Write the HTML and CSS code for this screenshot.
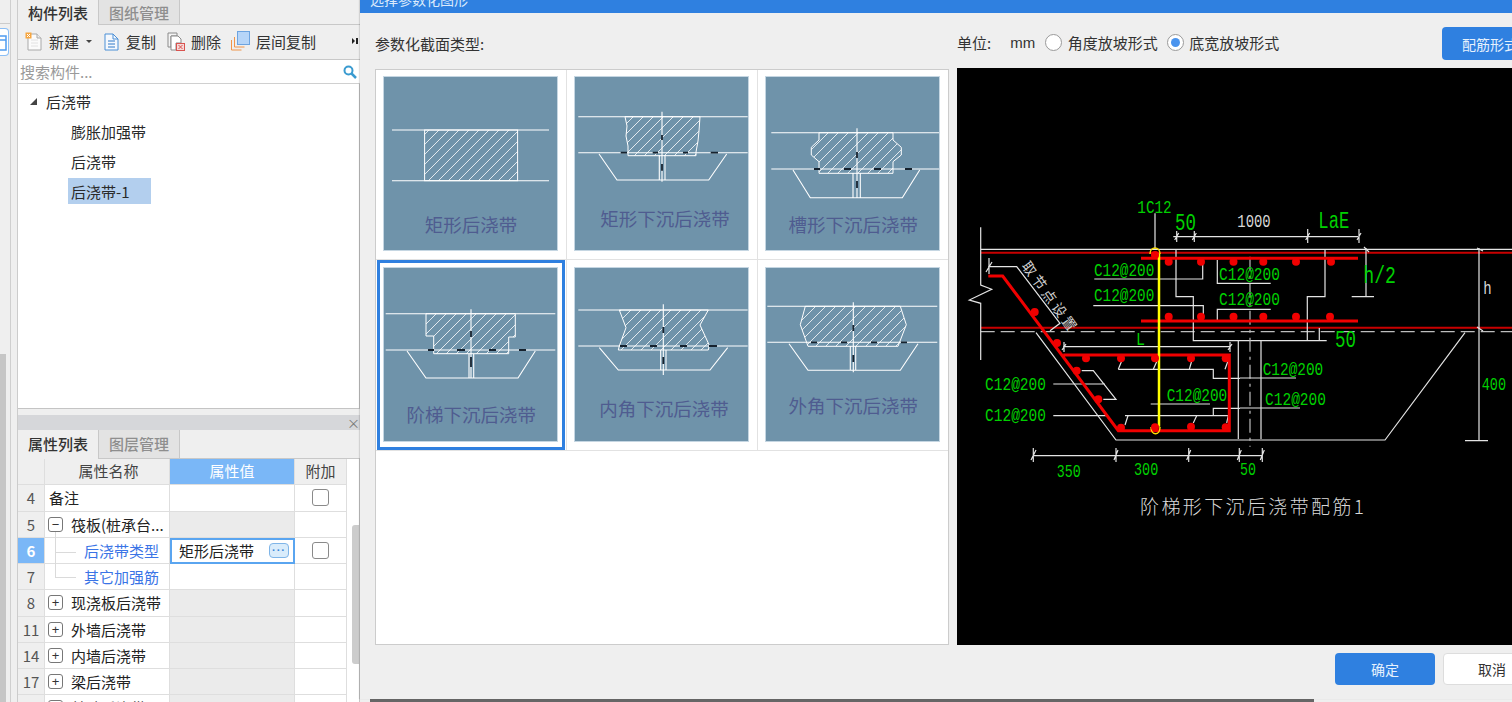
FILE: index.html
```html
<!DOCTYPE html>
<html lang="zh-CN">
<head>
<meta charset="utf-8">
<title>选择参数化图形</title>
<link rel="stylesheet" href="styles.css">
</head>
<body>
<div class="app">
  <div class="rail">
    <div class="rail-top"></div>
    <div class="rail-icon"><svg width="8" height="26" viewBox="0 0 8 26"><path d="M0 7h6v14H0" fill="none" stroke="#4f9cf0" stroke-width="1.5"/><path d="M0 11h6" stroke="#4f9cf0" stroke-width="1.5"/></svg></div>
    <div class="rail-thumb"></div>
  </div>
  <div class="side">
    <section class="panel-list">
      <div class="tabs">
        <div class="tab active">构件列表</div>
        <div class="tab">图纸管理</div>
      </div>
      <div class="toolbar">
        <div class="tool tool-new">
          <svg width="18" height="19" viewBox="0 0 18 19"><path d="M3 2h9l4 4v12H3z" fill="#fbfbfb" stroke="#a9a9a9"/><path d="M12 2v4h4" fill="#eee" stroke="#a9a9a9"/><path d="M6 8h7M6 11h7M6 14h7" stroke="#e2e2e2"/><rect x="0.5" y="0.5" width="6" height="6" fill="#f7a63f"/><path d="M2 2l3 3M5 2L2 5" stroke="#fff"/></svg>
          <span>新建</span><i class="caret"></i>
        </div>
        <div class="tool tool-copy">
          <svg width="17" height="19" viewBox="0 0 17 19"><path d="M2 2h8l5 5v11H2z" fill="#f4f8fd" stroke="#4a8fd6"/><path d="M10 2v5h5" fill="none" stroke="#4a8fd6"/><path d="M5 9h7M5 12h7M5 15h7" stroke="#2f78c8"/></svg>
          <span>复制</span>
        </div>
        <div class="tool tool-del">
          <svg width="18" height="19" viewBox="0 0 18 19"><path d="M1 1h9v3H4v11H1z" fill="#f4f4f4" stroke="#8a8a8a"/><path d="M4 4h7l3 3v4H9v7H4z" fill="#fff" stroke="#8a8a8a"/><rect x="9.5" y="11.5" width="8" height="7" fill="#f6d8d8" stroke="#d9534f"/><path d="M11.5 13l4 4M15.5 13l-4 4" stroke="#d9534f"/></svg>
          <span>删除</span>
        </div>
        <div class="tool tool-floor">
          <svg width="19" height="20" viewBox="0 0 19 20"><path d="M.5 9v10h10M3.500 6v10h10" fill="none" stroke="#f0954a"/><rect x="6.500" y="0.500" width="12" height="13" fill="#b6d5f8" stroke="#6da4e0"/></svg>
          <span>层间复制</span>
        </div>
        <div class="tool-more"><i class="more-tri"></i><i class="more-bar"></i></div>
      </div>
      <div class="search">
        <span>搜索构件...</span>
        <svg width="14" height="14" viewBox="0 0 14 14"><circle cx="5.500" cy="5.500" r="4" fill="none" stroke="#3a9bd0" stroke-width="2"/><path d="M8.500 8.500L13 13" stroke="#3a9bd0" stroke-width="2.500"/></svg>
      </div>
      <div class="tree">
        <div class="node root"><i class="arrow"></i>后浇带</div>
        <div class="node leaf"><span>膨胀加强带</span></div>
        <div class="node leaf"><span>后浇带</span></div>
        <div class="node leaf"><span class="selected">后浇带-1</span></div>
      </div>
    </section>
    <section class="panel-props">
      <div class="panel-head"><span class="close">×</span></div>
      <div class="tabs props-tabs">
        <div class="tab active">属性列表</div>
        <div class="tab">图层管理</div>
      </div>
      <div class="props-body">
        <div class="table">
          <div class="row head"><div class="num"></div><div class="name">属性名称</div><div class="val">属性值</div><div class="extra">附加</div></div>
          <div class="row"><div class="num">4</div><div class="name plain">备注</div><div class="val"></div><div class="extra"><i class="check"></i></div></div>
          <div class="row group"><div class="num">5</div><div class="name"><i class="exp">−</i>筏板(桩承台...</div><div class="val"></div><div class="extra"></div></div>
          <div class="row current"><div class="num">6</div><div class="name sub sub-first">后浇带类型</div><div class="val editing"><span>矩形后浇带</span><i class="more-btn">···</i></div><div class="extra"><i class="check"></i></div></div>
          <div class="row"><div class="num">7</div><div class="name sub sub-last">其它加强筋</div><div class="val"></div><div class="extra"></div></div>
          <div class="row group"><div class="num">8</div><div class="name"><i class="exp">+</i>现浇板后浇带</div><div class="val"></div><div class="extra"></div></div>
          <div class="row group"><div class="num">11</div><div class="name"><i class="exp">+</i>外墙后浇带</div><div class="val"></div><div class="extra"></div></div>
          <div class="row group"><div class="num">14</div><div class="name"><i class="exp">+</i>内墙后浇带</div><div class="val"></div><div class="extra"></div></div>
          <div class="row group"><div class="num">17</div><div class="name"><i class="exp">+</i>梁后浇带</div><div class="val"></div><div class="extra"></div></div>
          <div class="row group"><div class="num">20</div><div class="name"><i class="exp">+</i>基础后浇带</div><div class="val"></div><div class="extra"></div></div>
        </div>
        <div class="vscroll"><div class="vthumb"></div></div>
      </div>
    </section>
  </div>

  <div class="under"></div>
  <div class="dialog">
    <div class="titlebar"><span>选择参数化图形</span></div>
    <div class="dlg-main">
      <div class="col-left">
        <div class="label">参数化截面类型:</div>
        <div class="shapes">
          <div class="cell">
            <svg class="thumb" width="175" height="175" viewBox="0 0 175 175">
              <defs><pattern id="hatch" patternUnits="userSpaceOnUse" width="10" height="10"><path d="M-1 11L11 -1" stroke="#fff" stroke-width=".8"/></pattern></defs>
              <path class="ln" d="M9 54H166M9 104.700H166"/>
              <rect class="hatch" x="41.600" y="54" width="93" height="50.700"/>
              <text class="cap" x="88" y="155.500">矩形后浇带</text>
            </svg>
          </div>
          <div class="cell">
            <svg class="thumb" width="175" height="175" viewBox="0 0 175 175">
              <path class="hatch" d="M51 40.700L53 50 52 60 54 70 54 79.700H122V76L124 65 125 55 126 40.700Z"/>
              <path class="ln" d="M4.300 40.700H173.700M4.300 76.700H173.700M88 35.700V105.700M25 78L43 104H134.700L152.700 78M85.300 79V104M91 79V104"/>
              <path class="blk" d="M46.700 76.700H53M78.700 76.700H84M109 76.700H114M136.700 76.700H144M88 59V64M88 88V94.700"/>
              <text class="cap" x="91" y="149.500">矩形下沉后浇带</text>
            </svg>
          </div>
          <div class="cell">
            <svg class="thumb" width="175" height="175" viewBox="0 0 175 175">
              <path class="hatch" d="M54 56.700V64L46.300 71.300V79L54 85.700V97.300H128V85.700L136.300 79V71.300L128 64V56.700Z"/>
              <path class="ln" d="M6.300 56.700H175M6.300 93H175M92 52.300V122M28 94L45.300 121.700H137.300L154.700 94M88 97V122M95.300 97V122"/>
              <path class="blk" d="M49 93H55M79 93H86M109 93H116M140 93H147M92 76V82M92 105V112"/>
              <text class="cap" x="88.300" y="156">槽形下沉后浇带</text>
            </svg>
          </div>
          <div class="cell low chosen">
            <svg class="thumb" width="175" height="175" viewBox="0 0 175 175">
              <path class="hatch" d="M43 46.700V69H50.700V86.700H125.700V70H132.300V46.700Z"/>
              <path class="ln" d="M2.700 46.700H172.300M2.700 83H172.300M88 42.300V111.300M24 84L43 111H135L152.300 84M86 87V111M90.700 87V111"/>
              <path class="blk" d="M45 83H51M74 83H82M106 83H113M136 83H143M88 64V70M88 90V100"/>
              <text class="cap" x="88.300" y="154.500">阶梯下沉后浇带</text>
            </svg>
          </div>
          <div class="cell low">
            <svg class="thumb" width="175" height="175" viewBox="0 0 175 175">
              <path class="hatch" d="M45.300 43L52 60.700 45.300 79 44.300 83H134.300L135.300 78.300 126 58 134.300 43Z"/>
              <path class="ln" d="M4.300 43H173.700M4.300 79H173.700M89.300 37.300V108M25.300 80.700L44.300 103H136L153.700 80.700M86.700 83V103M92 83V103"/>
              <path class="blk" d="M46 79H53M76 79H83M106 79H113M135 79H143M89.300 60V66M89.300 90V97"/>
              <text class="cap" x="90" y="149">内角下沉后浇带</text>
            </svg>
          </div>
          <div class="cell low">
            <svg class="thumb" width="175" height="175" viewBox="0 0 175 175">
              <path class="hatch" d="M40.300 39.300L35.300 57.700 43 79.300H133L141.300 57.700 135.300 39.300Z"/>
              <path class="ln" d="M2.300 39.300H172.300M2.300 75.300H172.300M88.300 35.300V105.300M24 76.700L43 103.300H135.300L153 76.700M85.300 79V103M90.700 79V103"/>
              <path class="blk" d="M46 75.300H52M76 75.300H82M106 75.300H112M136 75.300H142M88.300 58V64M88.300 88V95"/>
              <text class="cap" x="88.300" y="145.500">外角下沉后浇带</text>
            </svg>
          </div>
        </div>
      </div>
      <div class="col-right">
        <div class="options">
          <span class="unit">单位:</span>
          <span class="mm">mm</span>
          <label class="radio"><i class="dot"></i>角度放坡形式</label>
          <label class="radio"><i class="dot on"></i>底宽放坡形式</label>
          <button class="btn primary form-btn">配筋形式</button>
        </div>
        <svg class="cad" width="555" height="577" viewBox="957 68 555 577">
          <!-- slab -->
          <path class="w" d="M980.700 249.300H1512"/>
          <path class="wd" d="M980.700 331.700H1512"/>
          <path class="dr" d="M980.700 252.700H1512M980.700 327.700H1512"/>
          <path class="w" d="M980.700 227.300V285L991.700 289.300 969.300 300 980.700 303.300V360"/>
          <!-- concrete outline -->
          <path class="w" d="M1036 332.700L1116 440H1385L1465 332.700"/>
          <path class="w" d="M1176 249.300V296.700H1193.300V340.700H1326.700M1307.300 340.700V296.700H1325V250"/>
          <path class="w" d="M1238.300 340.700V439M1261 340.700V439"/>
          <path class="wc" d="M1250 256.700V446.700"/>
          <!-- leaders -->
          <path class="w" d="M1155 213.300V250M1094.300 279H1202.700V261.700M1093.300 305.700H1203.300V316.700M1217.300 260V283.300H1270.700M1217.300 321V309.300H1270.700"/>
          <path class="w" d="M988.300 266.700H1016.700L1060 323.300 1050 330.700M1118.300 369.300H1213.300V378.300H1240M1125 415.700H1228.300M1213.300 415.700V408.300H1240"/>
          <path class="w" d="M1121.700 361L1118.300 369.300M1157 361L1153.300 369.300M1191.700 361L1189.300 369.300M1228 361L1225 369.300M1128 415.700L1125 425M1196.700 415.700L1193.300 423M1228.300 415.700L1226.700 423"/>
          <path class="w" d="M1053.300 384H1105M1081.700 370.700H1093.300L1116 399.300H1103.300M1053.300 415.700H1106.700M1150.700 404H1210M1240 378H1296M1240 408H1300"/>
          <!-- dimensions -->
          <path class="w" d="M1173.300 236.700H1358.300M1063.300 346.700H1230M1033.300 455.700H1262.300M1366 248.300V296.700M1351.700 296.700H1374M1479 248.300V440M1465 440.700H1488M1319.300 328V341"/>
          <path class="w" d="M1176.700 231V242M1174.700 240L1178.700 233M1194.300 231V242M1192.300 240L1196.300 233M1307.700 229V243M1305.700 240L1309.700 233M1359 229V243M1357 240L1361 233M1064 342V352M1062 350L1066 344M1230 342V352M1228 350L1232 344M989 258V274M986 272L992 262M1033.300 448V462M1031 460L1036 450M1116 448V462M1114 460L1118 450M1188.700 448V462M1186.700 460L1190.700 450M1239.300 448V462M1237.300 460L1241.300 450M1262.300 448V462M1260.300 460L1264.300 450M1364 247L1369 252M1477 248L1483 251M1477 327L1483 331"/>
          <!-- rebar -->
          <path class="rb" d="M1141 258.300H1358M1141 321H1358"/>
          <path class="rb" d="M988.300 276H1002.700L1118.300 430.700H1229.300V355H1063.300"/>
          <path class="yl" d="M1159 253.300V426.700"/>
          <path class="yl-thin" d="M1150 254C1150 246 1160 246 1160 254M1151 427C1151 436 1160 436 1160 427"/>
          <g class="dots">
            <circle cx="1155" cy="255" r="4"/><circle cx="1168.700" cy="261.700" r="4"/><circle cx="1201" cy="261.700" r="4"/><circle cx="1233.500" cy="261.700" r="4"/><circle cx="1263.300" cy="261.700" r="4"/><circle cx="1296" cy="261.700" r="4"/><circle cx="1331" cy="261.700" r="4"/>
            <circle cx="1168.700" cy="316.700" r="4"/><circle cx="1201" cy="316.700" r="4"/><circle cx="1233.500" cy="316.700" r="4"/><circle cx="1263.300" cy="316.700" r="4"/><circle cx="1296" cy="316.700" r="4"/><circle cx="1330" cy="316.700" r="4"/>
            <circle cx="1034.700" cy="312" r="4"/><circle cx="1057" cy="343" r="4"/><circle cx="1076.700" cy="370.700" r="4"/><circle cx="1098.300" cy="399.300" r="4"/>
            <circle cx="1086" cy="358.300" r="4"/><circle cx="1121" cy="358.300" r="4"/><circle cx="1155" cy="358.300" r="4"/><circle cx="1191" cy="358.300" r="4"/><circle cx="1225.700" cy="358.300" r="4"/>
            <circle cx="1121" cy="427.700" r="4"/><circle cx="1155" cy="427.300" r="4"/><circle cx="1191" cy="426.700" r="4"/><circle cx="1225.700" cy="427.300" r="4"/>
          </g>
          <!-- labels -->
          <text class="g" x="1137.300" y="213" textLength="34.400" lengthAdjust="spacingAndGlyphs">1C12</text>
          <text class="g big" x="1175" y="230" textLength="21" lengthAdjust="spacingAndGlyphs">50</text>
          <text class="t" x="1237.300" y="227" textLength="33.400" lengthAdjust="spacingAndGlyphs">1000</text>
          <text class="g big" x="1318.300" y="227.700" textLength="31" lengthAdjust="spacingAndGlyphs">LaE</text>
          <text class="g big" x="1363.300" y="282.700" textLength="32.700" lengthAdjust="spacingAndGlyphs">h/2</text>
          <text class="g big" x="1335" y="347.300" textLength="21" lengthAdjust="spacingAndGlyphs">50</text>
          <text class="g" x="1136" y="345" textLength="9" lengthAdjust="spacingAndGlyphs">L</text>
          <text class="t" x="1483.300" y="294.300" textLength="8.400" lengthAdjust="spacingAndGlyphs">h</text>
          <text class="g" x="1481.700" y="390" textLength="24.300" lengthAdjust="spacingAndGlyphs">400</text>
          <text class="g" x="1240" y="475" textLength="16" lengthAdjust="spacingAndGlyphs">50</text>
          <text class="g" x="1056.700" y="477.300" textLength="24" lengthAdjust="spacingAndGlyphs">350</text>
          <text class="g" x="1134" y="475" textLength="24.300" lengthAdjust="spacingAndGlyphs">300</text>
          <text class="g" x="1094" y="276" textLength="60.300" lengthAdjust="spacingAndGlyphs">C12@200</text>
          <text class="g" x="1094" y="301" textLength="60.300" lengthAdjust="spacingAndGlyphs">C12@200</text>
          <text class="g" x="1219" y="280" textLength="61" lengthAdjust="spacingAndGlyphs">C12@200</text>
          <text class="g" x="1219" y="305" textLength="61" lengthAdjust="spacingAndGlyphs">C12@200</text>
          <text class="g" x="1262.700" y="375" textLength="60.600" lengthAdjust="spacingAndGlyphs">C12@200</text>
          <text class="g" x="1265" y="405" textLength="61" lengthAdjust="spacingAndGlyphs">C12@200</text>
          <text class="g" x="985" y="390" textLength="61" lengthAdjust="spacingAndGlyphs">C12@200</text>
          <text class="g" x="985" y="420.700" textLength="61" lengthAdjust="spacingAndGlyphs">C12@200</text>
          <text class="g" x="1166.700" y="401" textLength="60.600" lengthAdjust="spacingAndGlyphs">C12@200</text>
          <text class="rot" transform="translate(1021 266) rotate(54)">取节点设置</text>
          <text class="ttl" x="1140" y="514" textLength="224">阶梯形下沉后浇带配筋1</text>
        </svg>
      </div>
    </div>
    <div class="dlg-foot">
      <button class="btn primary ok">确定</button>
      <button class="btn cancel">取消</button>
    </div>
  </div>
</div>
</body>
</html>
```

FILE: styles.css
```css
* { box-sizing: border-box; }
html, body { margin: 0; height: 100%; overflow: hidden; }
body { font-family: "Noto Sans CJK SC", "Liberation Sans", sans-serif; font-size: 15px; color: #222; }
i { font-style: normal; }

.app { position: relative; display: flex; width: 1512px; height: 702px; overflow: hidden; background: #efefef; }

/* left rail */
.rail { position: relative; width: 17px; flex: none; background: #efefef; border-right: 6px solid #efefef; display: flex; flex-direction: column; }
.rail::after { content: ""; position: absolute; top: 0; bottom: 0; right: 0; width: 1px; background: #cfcfcf; }
.rail-top { height: 24px; width: 10px; border-bottom: 1px solid #ccc; flex: none; }
.rail-icon { width: 9px; height: 28px; margin-top: 4px; background: #fff; border: 1px solid #8bbef5; border-left: 0; border-radius: 0 4px 4px 0; flex: none; }
.rail-thumb { width: 6px; margin-top: 298px; flex: 1; background: #c6c6c6; }

/* side column */
.side { width: 343px; flex: none; display: flex; flex-direction: column; border-left: 1px solid #ccc; }
.panel-list { height: 409px; flex: none; display: flex; flex-direction: column; background: #fff; border-bottom: 1px solid #c4c4c4; }

.tabs { display: flex; height: 25px; flex: none; background: #efefef; border-bottom: 1px solid #c8c8c8; }
.tab { width: 81px; display: flex; align-items: center; justify-content: center; font-weight: 500; color: #8e8e8e; background: #e3e3e3; border-right: 1px solid #c8c8c8; line-height: 1; }
.tab.active { color: #333; background: #efefef; margin-bottom: -1px; }

.toolbar { height: 35px; flex: none; display: flex; align-items: center; padding-bottom: 2px; background: #efefef; border-bottom: 1px solid #c8c8c8; color: #333; }
.tool { display: flex; align-items: center; }
.tool span { margin-left: 6px; line-height: 1; }
.tool-new { margin-left: 7px; }
.tool-copy { margin-left: 11px; }
.tool-del { margin-left: 11px; }
.tool-floor { margin-left: 10px; }
.caret { width: 0; height: 0; margin-left: 7px; border: 3px solid transparent; border-top: 3px solid #444; border-bottom: 0; }
.tool-more { display: flex; align-items: center; margin-left: 36px; gap: 1px; }
.more-tri { width: 0; height: 0; border-left: 3px solid #222; border-top: 3px solid transparent; border-bottom: 3px solid transparent; }
.more-bar { width: 2px; height: 6px; background: #222; }

.search { height: 24px; flex: none; display: flex; align-items: center; justify-content: space-between; padding: 0 3px 0 2px; background: #fff; border-bottom: 1px solid #d0d0d0; color: #9a9a9a; line-height: 1; }

.tree { flex: 1; padding-top: 2px; border-right: 1px solid #c4c4c4; line-height: 1; }
.node { height: 30px; display: flex; align-items: center; color: #2a2a2a; }
.root { padding-left: 12px; }
.arrow { width: 0; height: 0; margin-right: 9px; border-right: 7px solid #444; border-top: 7px solid transparent; }
.leaf { padding-left: 50px; }
.leaf span { display: flex; align-items: center; height: 26px; padding: 0 3px; }
.selected { width: 83px; background: #b3cfee; }

/* properties */
.panel-props { flex: 1; margin-top: 6px; display: flex; flex-direction: column; min-height: 0; background: #fff; }
.panel-head { height: 15px; flex: none; background: #d6d7da; display: flex; justify-content: flex-end; align-items: center; color: #777; font-size: 13px; line-height: 1; }
.props-tabs { height: 29px; }
.props-tabs .tab { padding-bottom: 2px; }
.props-body { flex: 1; display: flex; min-height: 0; }
.table { width: 329px; flex: none; }
.row { display: grid; grid-template-columns: 27px 125px 125px 52px; height: 26.25px; line-height: 1; }
.row > div { display: flex; align-items: center; border-right: 1px solid #dedede; border-bottom: 1px solid #dedede; min-width: 0; white-space: nowrap; }
.num { justify-content: center; background: #efefef; color: #555; }
.head > div { background: #efefef; justify-content: center; color: #444; padding-bottom: 2px; }
.head .val { background: #7ab7f7; color: #fff; }
.name { padding-left: 3px; color: #222; }
.plain { padding-left: 4px; }
.group .val { background: #ebebeb; }
.extra { justify-content: center; }
.exp { width: 15px; height: 15px; margin-right: 8px; flex: none; border: 1px solid #777; border-radius: 3px; display: flex; align-items: center; justify-content: center; font-size: 13px; color: #333; background: #fff; font-family: "Liberation Sans", sans-serif; }
.check { width: 17px; height: 17px; background: #fff; border: 1px solid #8a8a8a; border-radius: 3px; }
.row .sub { position: relative; padding-left: 39px; color: #3a74e6; }
.sub::before { content: ""; position: absolute; left: 10px; top: -6px; width: 20px; height: 20px; border-left: 1px solid #dadada; border-bottom: 1px solid #dadada; }
.sub-last::before { top: -13px; height: 26px; }
.current .num { background: #7ab7f7; color: #fff; font-weight: 700; }
.row .editing { justify-content: space-between; padding: 0 4px 0 7px; border: 2px solid #5aa5f0; }
.more-btn { width: 20px; height: 15px; display: flex; align-items: center; justify-content: center; background: #d9ecfb; border: 1px solid #7fb5e8; border-radius: 4px; color: #3d88d8; font: 700 11px/1 "Liberation Sans", sans-serif; letter-spacing: 1px; overflow: hidden; }
.vscroll { flex: 1; position: relative; border-right: 1px solid #c8c8c8; }
.vthumb { position: absolute; top: 66px; right: 0; width: 7px; height: 139px; background: #ccc; border-radius: 3px 0 0 3px; }

/* dialog */
.under { position: absolute; left: 370px; bottom: 0; width: 944px; height: 3px; background: #666; }
.dialog { position: absolute; left: 360px; top: 0; width: 1200px; height: 699px; background: #efefef; display: flex; flex-direction: column; box-shadow: -1px 0 1px rgba(0,0,0,.12); }
.titlebar { height: 13px; flex: none; background: #2f80e0; overflow: hidden; color: #dbeafc; font-size: 14px; line-height: 1; }
.titlebar span { display: block; margin: -8px 0 0 10px; }
.dlg-main { height: 632px; flex: none; display: flex; }
.col-left { width: 597px; flex: none; padding-left: 15px; }
.label { height: 56px; padding-top: 22px; line-height: 18px; color: #333; }
.shapes { width: 574px; height: 576px; background: #fff; border: 1px solid #ccc; display: grid; grid-template-columns: 191px 191px 190px; grid-template-rows: 190px 191px; align-content: start; }
.cell { position: relative; padding: 6px 0 0 7px; border-right: 1px solid #e2e2e2; border-bottom: 1px solid #e2e2e2; }
.cell:nth-child(3n) { border-right: 0; }
.cell.low { padding-top: 7px; }
.chosen::after { content: ""; position: absolute; left: 1px; top: 0; right: 1px; bottom: 0; border: 3px solid #2f80e0; }
.thumb { display: block; background: #6f93aa; outline: 1px solid #c5d6e2; outline-offset: -1px; }
.ln { fill: none; stroke: #fff; stroke-width: 1.1; }
.hatch { fill: url(#hatch); stroke: #fff; stroke-width: 1; }
.blk { fill: none; stroke: #16222e; stroke-width: 1.800; }
.cap { font-family: "Noto Sans CJK SC", sans-serif; font-size: 18.500px; fill: #4f5c90; text-anchor: middle; }

.col-right { flex: none; width: 555px; }
.options { height: 55px; position: relative; display: flex; align-items: center; padding-top: 4px; color: #333; line-height: 1; }
.unit { margin-right: 19px; }
.mm { font-family: "Liberation Sans", sans-serif; margin-right: 14px; width: 21px; }
.radio { display: flex; align-items: center; margin-right: 9px; }
.dot { width: 17px; height: 17px; margin-right: 5.500px; border: 1px solid #9a9a9a; border-radius: 50%; background: #fff; position: relative; }
.dot.on::after { content: ""; position: absolute; left: 3px; top: 3px; width: 9px; height: 9px; border-radius: 50%; background: #4a94ee; }
.btn { font: inherit; font-size: 14px; line-height: 1; border-radius: 4px; padding: 0; }
.primary { background: #2f80e0; color: #e6f1fd; border: 0; }
.form-btn { position: absolute; left: 485px; top: 14px; width: 110px; height: 33px; text-align: left; padding-left: 20px; }
.cad { display: block; background: #000; }
.w { fill: none; stroke: #e4e4e4; stroke-width: 1.200; }
.wd { fill: none; stroke: #bdbdbd; stroke-width: 1.200; stroke-dasharray: 14 6; }
.wc { fill: none; stroke: #bdbdbd; stroke-width: 1.200; stroke-dasharray: 14 5 3 5; }
.dr { fill: none; stroke: #c80000; stroke-width: 2; }
.rb { fill: none; stroke: #f00000; stroke-width: 3; }
.yl { fill: none; stroke: #ffff00; stroke-width: 2.500; }
.yl-thin { fill: none; stroke: #ffe000; stroke-width: 1.500; }
.dots { fill: #f00000; }
.g { font-family: "Liberation Mono", monospace; font-size: 18px; fill: #00d000; }
.g.big { font-size: 23px; }
.t { font-family: "Liberation Mono", monospace; font-size: 18px; fill: #d8d8d8; }
.rot { font-family: "Noto Sans CJK SC", sans-serif; font-size: 14px; fill: #d0d0d0; letter-spacing: 3px; }
.ttl { font-family: "Noto Sans CJK SC", sans-serif; font-size: 19px; font-weight: 300; fill: #d8d8d8; }

.dlg-foot { flex: 1; display: flex; align-items: flex-start; padding: 8px 0 0 975px; gap: 8px; }
.ok { width: 100px; height: 32px; }
.cancel { width: 100px; height: 32px; background: #fff; border: 1px solid #ddd; color: #333; text-align: left; padding-left: 34px; }
```
